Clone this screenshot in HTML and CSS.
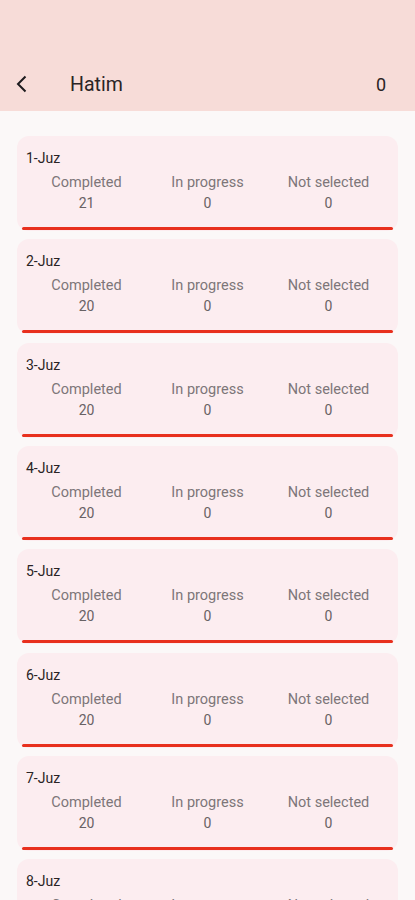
FILE: index.html
```html
<!DOCTYPE html>
<html>
<head>
<meta charset="utf-8">
<link rel="stylesheet" href="styles.css">
</head>
<body>
<div class="app">
  <header class="appbar">
    <div class="toolbar">
      <svg class="back" width="24" height="24" viewBox="0 0 24 24"><path d="M15.5 4.5 L8 12 L15.5 19.5" fill="none" stroke="#1d1b1e" stroke-width="2"/></svg>
      <div class="title">Hatim</div>
      <div class="count">0</div>
    </div>
  </header>
  <main class="list">
    <div class="card"><div class="name">1-Juz</div><div class="stats"><div class="stat"><span class="label">Completed</span><span class="value">21</span></div><div class="stat"><span class="label">In progress</span><span class="value">0</span></div><div class="stat"><span class="label">Not selected</span><span class="value">0</span></div></div><div class="bar"></div></div>
    <div class="card"><div class="name">2-Juz</div><div class="stats"><div class="stat"><span class="label">Completed</span><span class="value">20</span></div><div class="stat"><span class="label">In progress</span><span class="value">0</span></div><div class="stat"><span class="label">Not selected</span><span class="value">0</span></div></div><div class="bar"></div></div>
    <div class="card"><div class="name">3-Juz</div><div class="stats"><div class="stat"><span class="label">Completed</span><span class="value">20</span></div><div class="stat"><span class="label">In progress</span><span class="value">0</span></div><div class="stat"><span class="label">Not selected</span><span class="value">0</span></div></div><div class="bar"></div></div>
    <div class="card"><div class="name">4-Juz</div><div class="stats"><div class="stat"><span class="label">Completed</span><span class="value">20</span></div><div class="stat"><span class="label">In progress</span><span class="value">0</span></div><div class="stat"><span class="label">Not selected</span><span class="value">0</span></div></div><div class="bar"></div></div>
    <div class="card"><div class="name">5-Juz</div><div class="stats"><div class="stat"><span class="label">Completed</span><span class="value">20</span></div><div class="stat"><span class="label">In progress</span><span class="value">0</span></div><div class="stat"><span class="label">Not selected</span><span class="value">0</span></div></div><div class="bar"></div></div>
    <div class="card"><div class="name">6-Juz</div><div class="stats"><div class="stat"><span class="label">Completed</span><span class="value">20</span></div><div class="stat"><span class="label">In progress</span><span class="value">0</span></div><div class="stat"><span class="label">Not selected</span><span class="value">0</span></div></div><div class="bar"></div></div>
    <div class="card"><div class="name">7-Juz</div><div class="stats"><div class="stat"><span class="label">Completed</span><span class="value">20</span></div><div class="stat"><span class="label">In progress</span><span class="value">0</span></div><div class="stat"><span class="label">Not selected</span><span class="value">0</span></div></div><div class="bar"></div></div>
    <div class="card"><div class="name">8-Juz</div><div class="stats"><div class="stat"><span class="label">Completed</span><span class="value">20</span></div><div class="stat"><span class="label">In progress</span><span class="value">0</span></div><div class="stat"><span class="label">Not selected</span><span class="value">0</span></div></div><div class="bar"></div></div>
  </main>
</div>
</body>
</html>
```
FILE: styles.css
```css
* { box-sizing: border-box; }
html, body { margin: 0; padding: 0; }
body {
  width: 415px;
  height: 900px;
  overflow: hidden;
  background: #fbf8f8;
  font-family: Roboto, "Noto Sans", sans-serif;
}
.appbar {
  background: #f7dcd8;
  padding-top: 56px;
  height: 111px;
}
.toolbar {
  height: 56px;
  display: flex;
  align-items: center;
  padding: 0 29px 0 10px;
}
.back { display: block; }
.title {
  margin-left: 36px;
  font-size: 19.5px;
  color: #2a2425;
  flex: 1;
}
.count {
  font-size: 18px;
  color: #2a2425;
}
.list {
  padding: 25px 17px 0;
  display: flex;
  flex-direction: column;
  gap: 8.33px;
}
.card {
  background: #fcedf0;
  border-radius: 12px;
  padding: 13px 9px 1px;
}
.name {
  font-size: 14px;
  line-height: 18px;
  color: #2a2425;
}
.stats {
  display: grid;
  grid-template-columns: 1fr 1fr 1fr;
  margin-top: 6px;
}
.stat {
  display: flex;
  flex-direction: column;
  align-items: center;
}
.label {
  font-size: 14.5px;
  line-height: 20px;
  color: #7d7679;
}
.value {
  font-size: 14px;
  line-height: 20px;
  color: #696264;
}
.bar {
  margin: 14px -4px 0;
  height: 3px;
  border-radius: 2px;
  background: #e8301e;
}
```
